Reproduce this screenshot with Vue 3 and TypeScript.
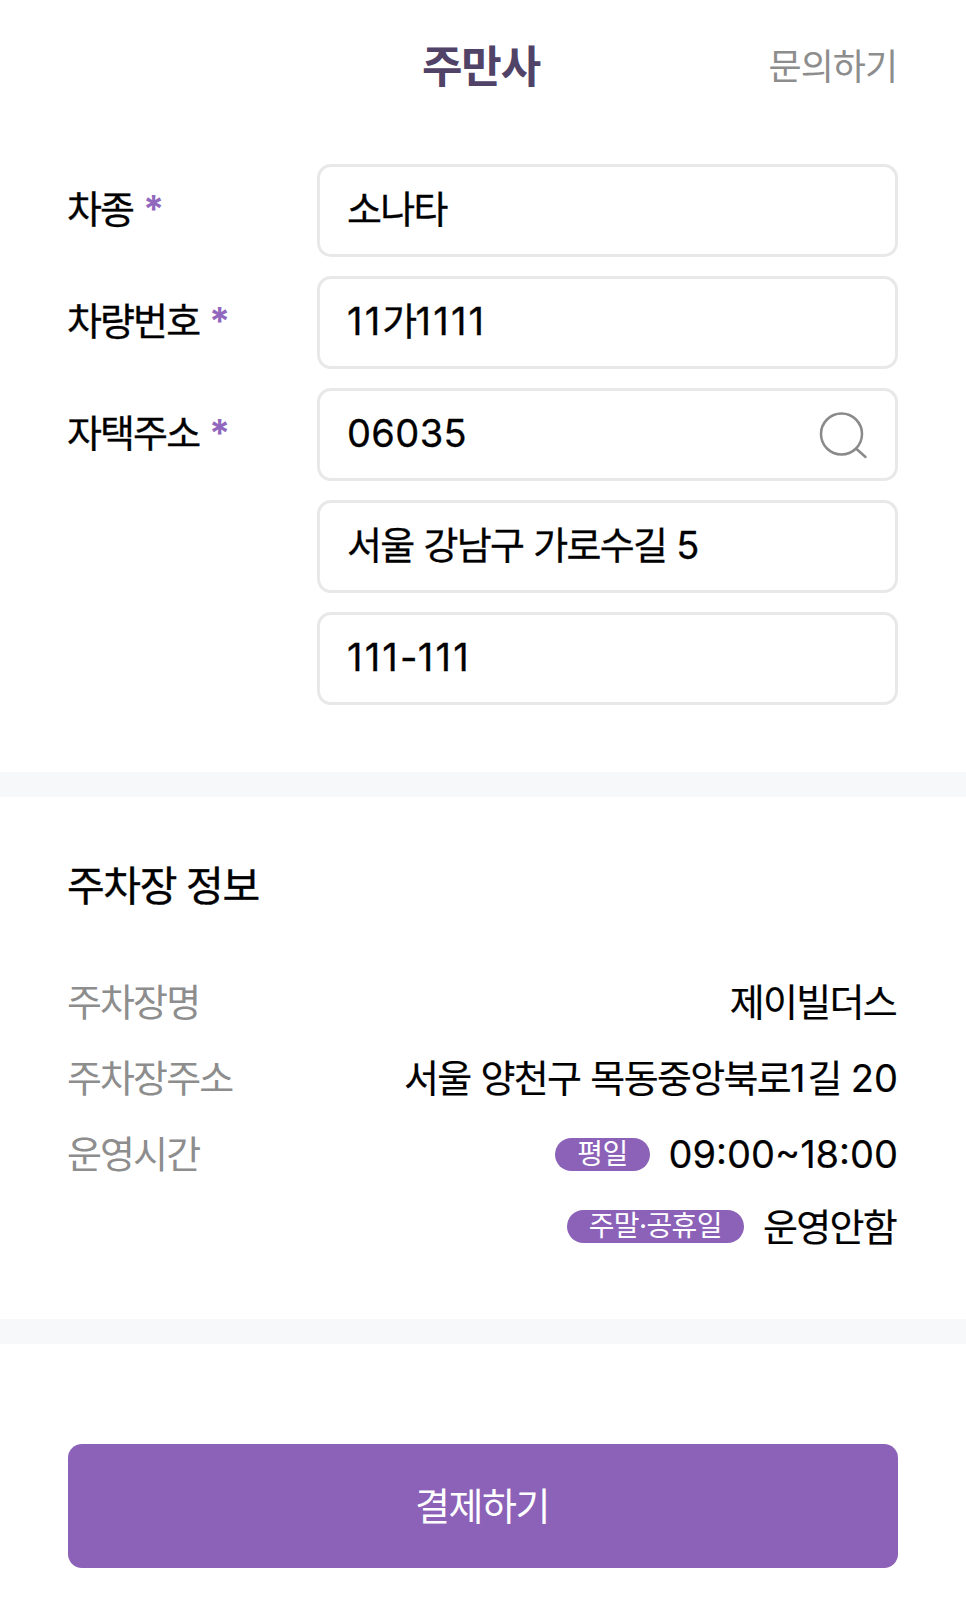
<script setup lang="ts">
interface Field { label: string; value: string; search?: boolean }
const fields: Field[] = [
  { label: '차종', value: '소나타' },
  { label: '차량번호', value: '11가1111' },
  { label: '자택주소', value: '06035', search: true },
  { label: '', value: '서울 강남구 가로수길 5' },
  { label: '', value: '111-111' },
]
// Hangul, the digit 1 and other Latin run at different tracking in the design.
const segs = (s: string) =>
  (s.match(/[\uAC00-\uD7A3 ]+|1+|[^\uAC00-\uD7A3 1]+/g) ?? []).map((t) => ({
    t,
    cls: /[\uAC00-\uD7A3]/.test(t) ? 'ko' : t[0] === '1' ? 'one' : 'num',
  }))
const addr = segs('서울 양천구 목동중앙북로1길 20')
</script>

<template>
  <div class="page">
    <header class="header">
      <h1 class="title">주만사</h1>
      <span class="contact">문의하기</span>
    </header>

    <section class="form">
      <div v-for="(f, i) in fields" :key="i" class="row">
        <div class="label">
          <template v-if="f.label">{{ f.label }} <span class="req">*</span></template>
        </div>
        <div class="input">
          <span class="value"><span v-for="(s, j) in segs(f.value)" :key="j" :class="s.cls">{{ s.t }}</span></span>
          <svg v-if="f.search" class="search" viewBox="0 0 48 44" fill="none" stroke="#8a8a8a" stroke-width="2.5">
            <circle cx="23.5" cy="21" r="20.5" />
            <path d="M38.5 36 L47.5 44" stroke-linecap="round" />
          </svg>
        </div>
      </div>
    </section>

    <div class="divider first"></div>

    <section class="info">
      <h2 class="info-title">주차장 정보</h2>
      <dl class="info-list">
        <div class="info-row">
          <dt>주차장명</dt>
          <dd><span class="ko end">제이빌더스</span></dd>
        </div>
        <div class="info-row">
          <dt>주차장주소</dt>
          <dd><span><span v-for="(s, j) in addr" :key="j" :class="s.cls">{{ s.t }}</span></span></dd>
        </div>
        <div class="info-row">
          <dt>운영시간</dt>
          <dd><span class="badge">평일</span><span class="num">09:00~18:00</span></dd>
        </div>
        <div class="info-row second">
          <dt></dt>
          <dd><span class="badge">주말·공휴일</span><span class="ko end">운영안함</span></dd>
        </div>
      </dl>
    </section>

    <div class="divider"></div>

    <div class="footer">
      <button class="pay">결제하기</button>
    </div>
  </div>
</template>

<style>
html, body { margin: 0; background: #fff; }
</style>

<style scoped>
.page {
  width: 966px;
  height: 1598px;
  overflow: hidden;
  background: #fff;
  color: #000;
  font-family: Inter, "Noto Sans CJK KR", sans-serif;
}
.header {
  position: relative;
  height: 132px;
  display: flex;
  justify-content: center;
}
.title {
  margin: 0 4px 0 0;
  padding-top: 37px;
  font-size: 44px;
  line-height: 60px;
  font-weight: 700;
  color: #514267;
  letter-spacing: -1.2px;
}
.contact {
  position: absolute;
  right: 69px;
  top: 43px;
  font-size: 36px;
  line-height: 48px;
  color: #8d8d8d;
  letter-spacing: -1px;
}
.form {
  padding: 32px 68px 0 67px;
  display: flex;
  flex-direction: column;
  gap: 19px;
}
.row { display: flex; }
.label {
  width: 250px;
  flex: none;
  font-size: 38px;
  line-height: 48px;
  padding-top: 21px;
  letter-spacing: -1.9px;
  -webkit-text-stroke: 0.3px #000;
}
.req { color: #9168bd; margin-left: 1px; font-weight: 700; -webkit-text-stroke: 0; }
.input {
  flex: 1;
  height: 93px;
  box-sizing: border-box;
  border: 3px solid #e8e8e8;
  border-radius: 14px;
  padding: 0 27px;
  display: flex;
  align-items: center;
  justify-content: space-between;
  font-size: 38px;
}
.value { line-height: 48px; padding-bottom: 3px; -webkit-text-stroke: 0.3px #000; }
.ko { letter-spacing: -1.7px; word-spacing: 1px; }
.ko.end { margin-right: 2px; }
.num { letter-spacing: 0.4px; }
dd .num { letter-spacing: 0; }
.one { letter-spacing: 2.2px; }
.search { width: 48px; height: 44px; margin-right: 2px; overflow: visible; }
.divider { height: 25px; background: #f7f8fa; margin-top: 58px; }
.divider.first { margin-top: 67px; }
.info { padding: 0 68px 0 67px; }
.info-title {
  margin: 0;
  padding-top: 63px;
  font-size: 41px;
  line-height: 52px;
  font-weight: 400;
  letter-spacing: -1.4px;
  -webkit-text-stroke: 0.4px #000;
}
.info-list { margin: 52px 0 0; }
.info-row {
  display: flex;
  justify-content: space-between;
  align-items: center;
  height: 76px;
}
.info-row.second { height: 69px; }
dt { font-size: 38px; line-height: 48px; color: #8d8d8d; letter-spacing: -1.9px; }
dd {
  margin: 0;
  font-size: 38px;
  line-height: 48px;
  display: flex;
  align-items: center;
  -webkit-text-stroke: 0.2px #000;
}
.badge {
  display: inline-flex;
  align-items: center;
  justify-content: center;
  height: 33px;
  padding: 0 22px;
  margin-right: 19px;
  border-radius: 17px;
  background: #8c62b8;
  color: #fff;
  font-size: 28px;
  line-height: 33px;
  letter-spacing: -0.6px;
  -webkit-text-stroke: 0;
}
.footer { padding: 100px 68px 0; }
.pay {
  width: 100%;
  height: 124px;
  border: none;
  border-radius: 14px;
  background: #8c62b8;
  color: #fff;
  font: inherit;
  font-size: 38px;
  letter-spacing: -1.5px;
  padding: 0 2px 6px 0;
}
</style>
